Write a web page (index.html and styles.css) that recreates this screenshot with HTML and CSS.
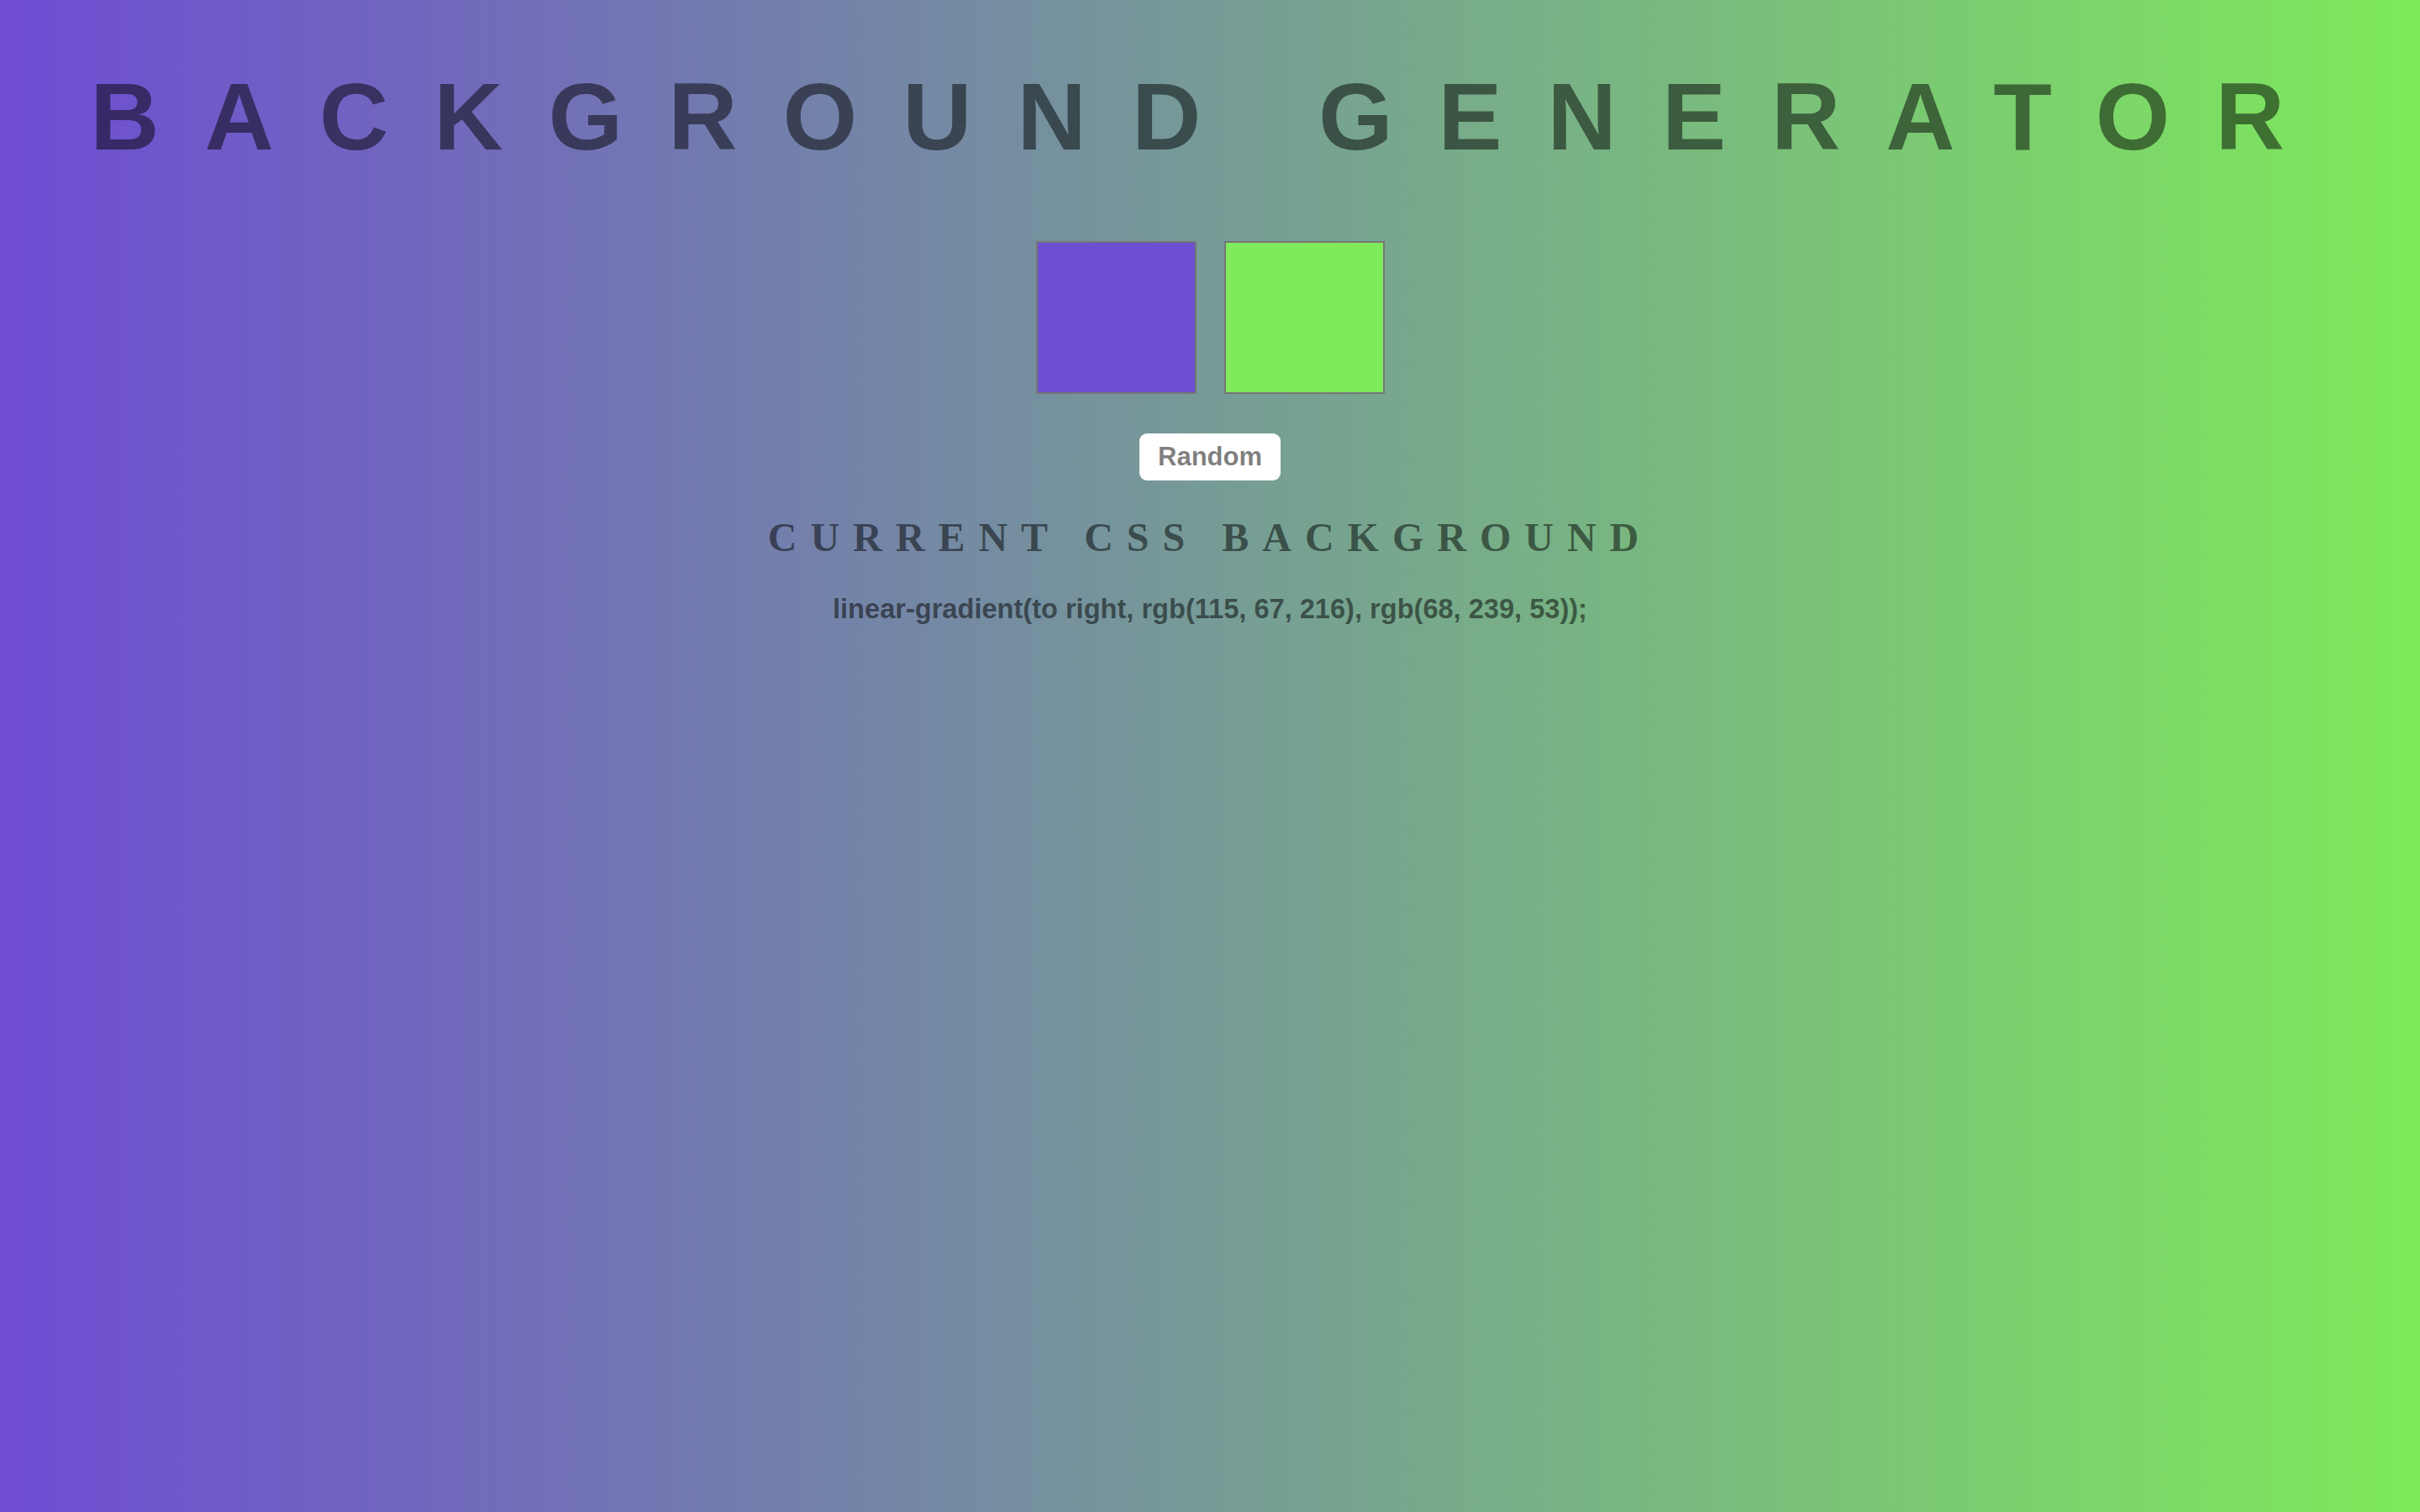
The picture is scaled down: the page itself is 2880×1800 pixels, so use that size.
FILE: index.html
```html
<!DOCTYPE html>
<html lang="en">
<head>
<meta charset="utf-8">
<title>Background Generator</title>
<link rel="stylesheet" href="styles.css">
</head>
<body class="page">
  <h1 class="title">Background Generator</h1>
  <div class="swatches">
    <div class="swatch swatch-one"></div>
    <div class="swatch swatch-two"></div>
  </div>
  <button class="random-btn" type="button">Random</button>
  <h2 class="subtitle">Current CSS Background</h2>
  <h3 class="css-output">linear-gradient(to right, rgb(115, 67, 216), rgb(68, 239, 53));</h3>
</body>
</html>
```
FILE: styles.css
```css
html {
  height: 100%;
}

.page {
  margin: 0;
  min-height: 100%;
  display: flex;
  flex-direction: column;
  align-items: center;
  text-align: center;
  color: rgba(0, 0, 0, 0.5);
  background: linear-gradient(to right, rgb(110, 76, 211), rgb(126, 234, 90));
  font-family: "Liberation Sans", Arial, sans-serif;
}

.title {
  margin: 75px 0 0;
  font-family: "Liberation Sans", Arial, sans-serif;
  font-weight: 700;
  font-size: 114px;
  line-height: 128px;
  letter-spacing: 54px;
  text-transform: uppercase;
  white-space: nowrap;
}

.swatches {
  margin-top: 84px;
  display: flex;
  gap: 33px;
}

.swatch {
  width: 191px;
  height: 182px;
  box-sizing: border-box;
  border: 2px solid #767676;
}

.swatch-one {
  background: rgb(108, 79, 208);
}

.swatch-two {
  background: rgb(126, 234, 92);
}

.random-btn {
  margin-top: 47px;
  height: 56px;
  padding: 0 22px;
  border: none;
  border-radius: 9px;
  background: #ffffff;
  color: rgba(0, 0, 0, 0.5);
  font-family: "Liberation Sans", Arial, sans-serif;
  font-weight: 700;
  font-size: 31px;
  line-height: 56px;
}

.subtitle {
  margin: 40px 0 0;
  font-family: "Liberation Serif", "Times New Roman", serif;
  font-weight: 700;
  font-size: 48px;
  line-height: 56px;
  letter-spacing: 16px;
  text-transform: uppercase;
}

.css-output {
  margin: 37px 0 0;
  font-family: "Liberation Sans", Arial, sans-serif;
  font-weight: 700;
  font-size: 32.6px;
  line-height: 40px;
}
```
